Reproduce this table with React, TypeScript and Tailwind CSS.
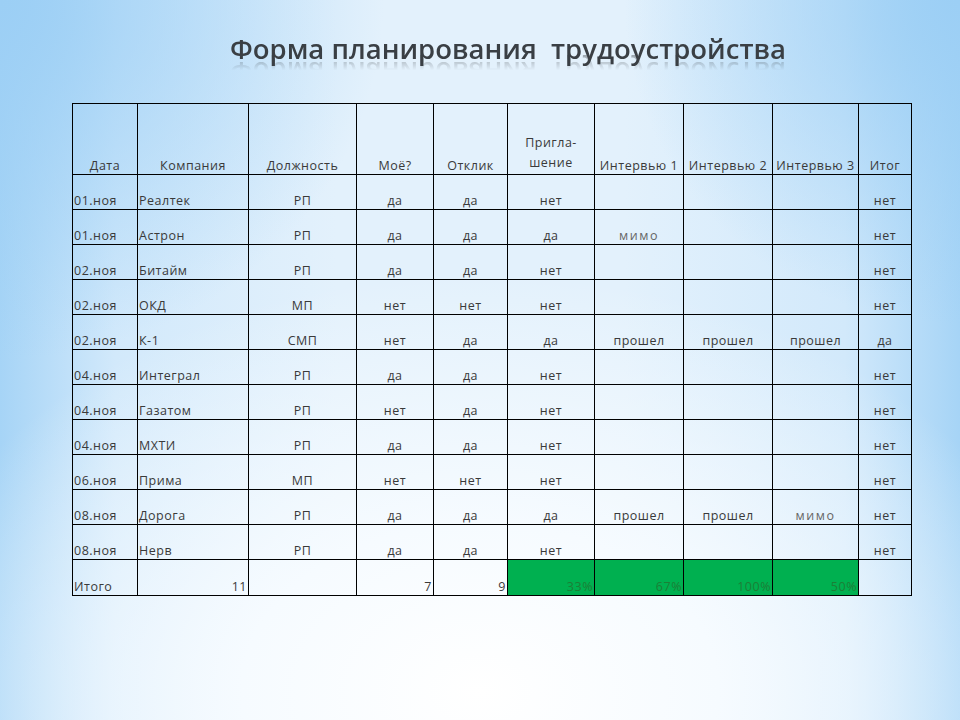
import React from "react";

type Row = [string, string, string, string, string, string, string, string, string, string];

const rows: Row[] = [
  ["01.ноя", "Реалтек", "РП", "да", "да", "нет", "", "", "", "нет"],
  ["01.ноя", "Астрон", "РП", "да", "да", "да", "мимо", "", "", "нет"],
  ["02.ноя", "Битайм", "РП", "да", "да", "нет", "", "", "", "нет"],
  ["02.ноя", "ОКД", "МП", "нет", "нет", "нет", "", "", "", "нет"],
  ["02.ноя", "К-1", "СМП", "нет", "да", "да", "прошел", "прошел", "прошел", "да"],
  ["04.ноя", "Интеграл", "РП", "да", "да", "нет", "", "", "", "нет"],
  ["04.ноя", "Газатом", "РП", "нет", "да", "нет", "", "", "", "нет"],
  ["04.ноя", "МХТИ", "РП", "да", "да", "нет", "", "", "", "нет"],
  ["06.ноя", "Прима", "МП", "нет", "нет", "нет", "", "", "", "нет"],
  ["08.ноя", "Дорога", "РП", "да", "да", "да", "прошел", "прошел", "мимо", "нет"],
  ["08.ноя", "Нерв", "РП", "да", "да", "нет", "", "", "", "нет"],
];

const widths = ["w-[65px]", "w-[111px]", "w-[108px]", "w-[77px]", "w-[74px]", "w-[87px]", "w-[89px]", "w-[89px]", "w-[86px]", "w-[53px]"];

const cell = "border border-black align-bottom px-[1px] pb-[1px] leading-[15px] whitespace-nowrap";

export default function App() {
  return (
    <div
      className="relative h-[720px] w-[960px] overflow-hidden bg-[radial-gradient(ellipse_62%_58%_at_50%_96%,#ffffff_0%,#f6fbff_40%,rgba(255,255,255,0)_100%),radial-gradient(ellipse_40%_50%_at_0%_0%,#9ccff5_0%,rgba(156,207,245,0)_100%),radial-gradient(ellipse_35%_45%_at_100%_0%,#9ccff5_0%,rgba(156,207,245,0)_100%),linear-gradient(90deg,#a6d4f6_0%,#d2e9fb_12%,#e3f1fc_35%,#e3f1fc_65%,#d2e9fb_88%,#a6d4f6_100%)]"
      style={{ fontFamily: '"Open Sans", "Liberation Sans", sans-serif' }}
    >
      <div className="flex h-[103px] items-start justify-center pl-[56px] pt-[31px]">
        <h1 className="text-[27.5px] font-semibold leading-[36px] text-[#3a3f44] [-webkit-box-reflect:below_-13px_linear-gradient(transparent_55%,rgba(255,255,255,0.45))]">
          Форма планирования&nbsp; трудоустройства
        </h1>
      </div>

      <div className="pl-[72px]">
        <table className="table-fixed border-collapse text-[12.5px] tracking-[0.5px] text-[#3a3a3a]">
          <colgroup>
            {widths.map((w, i) => (
              <col key={i} className={w} />
            ))}
          </colgroup>
          <thead>
            <tr className="h-[71px]">
              <th className={`${cell} text-center font-normal`}>Дата</th>
              <th className={`${cell} text-center font-normal`}>Компания</th>
              <th className={`${cell} text-center font-normal`}>Должность</th>
              <th className={`${cell} text-center font-normal`}>Моё?</th>
              <th className={`${cell} text-center font-normal`}>Отклик</th>
              <th className={`${cell} text-center font-normal leading-[20px]`}>
                Пригла-
                <br />
                шение
              </th>
              <th className={`${cell} text-center font-normal`}>Интервью 1</th>
              <th className={`${cell} text-center font-normal`}>Интервью 2</th>
              <th className={`${cell} text-center font-normal`}>Интервью 3</th>
              <th className={`${cell} text-center font-normal`}>Итог</th>
            </tr>
          </thead>
          <tbody>
            {rows.map((r, i) => (
              <tr key={i} className="h-[35px]">
                {r.map((v, j) => (
                  <td
                    key={j}
                    className={`${cell} ${j < 2 ? "text-left" : "text-center"} ${
                      v === "мимо" ? "tracking-[1.5px] text-[#666]" : ""
                    }`}
                  >
                    {v}
                  </td>
                ))}
              </tr>
            ))}
            <tr className="h-[36px]">
              <td className={`${cell} text-left`}>Итого</td>
              <td className={`${cell} text-right`}>11</td>
              <td className={cell}></td>
              <td className={`${cell} text-right`}>7</td>
              <td className={`${cell} text-right`}>9</td>
              <td className={`${cell} bg-[#00b050] text-right text-[#1c7f36]`}>33%</td>
              <td className={`${cell} bg-[#00b050] text-right text-[#1c7f36]`}>67%</td>
              <td className={`${cell} bg-[#00b050] text-right text-[#1c7f36]`}>100%</td>
              <td className={`${cell} bg-[#00b050] text-right text-[#1c7f36]`}>50%</td>
              <td className={cell}></td>
            </tr>
          </tbody>
        </table>
      </div>
    </div>
  );
}
